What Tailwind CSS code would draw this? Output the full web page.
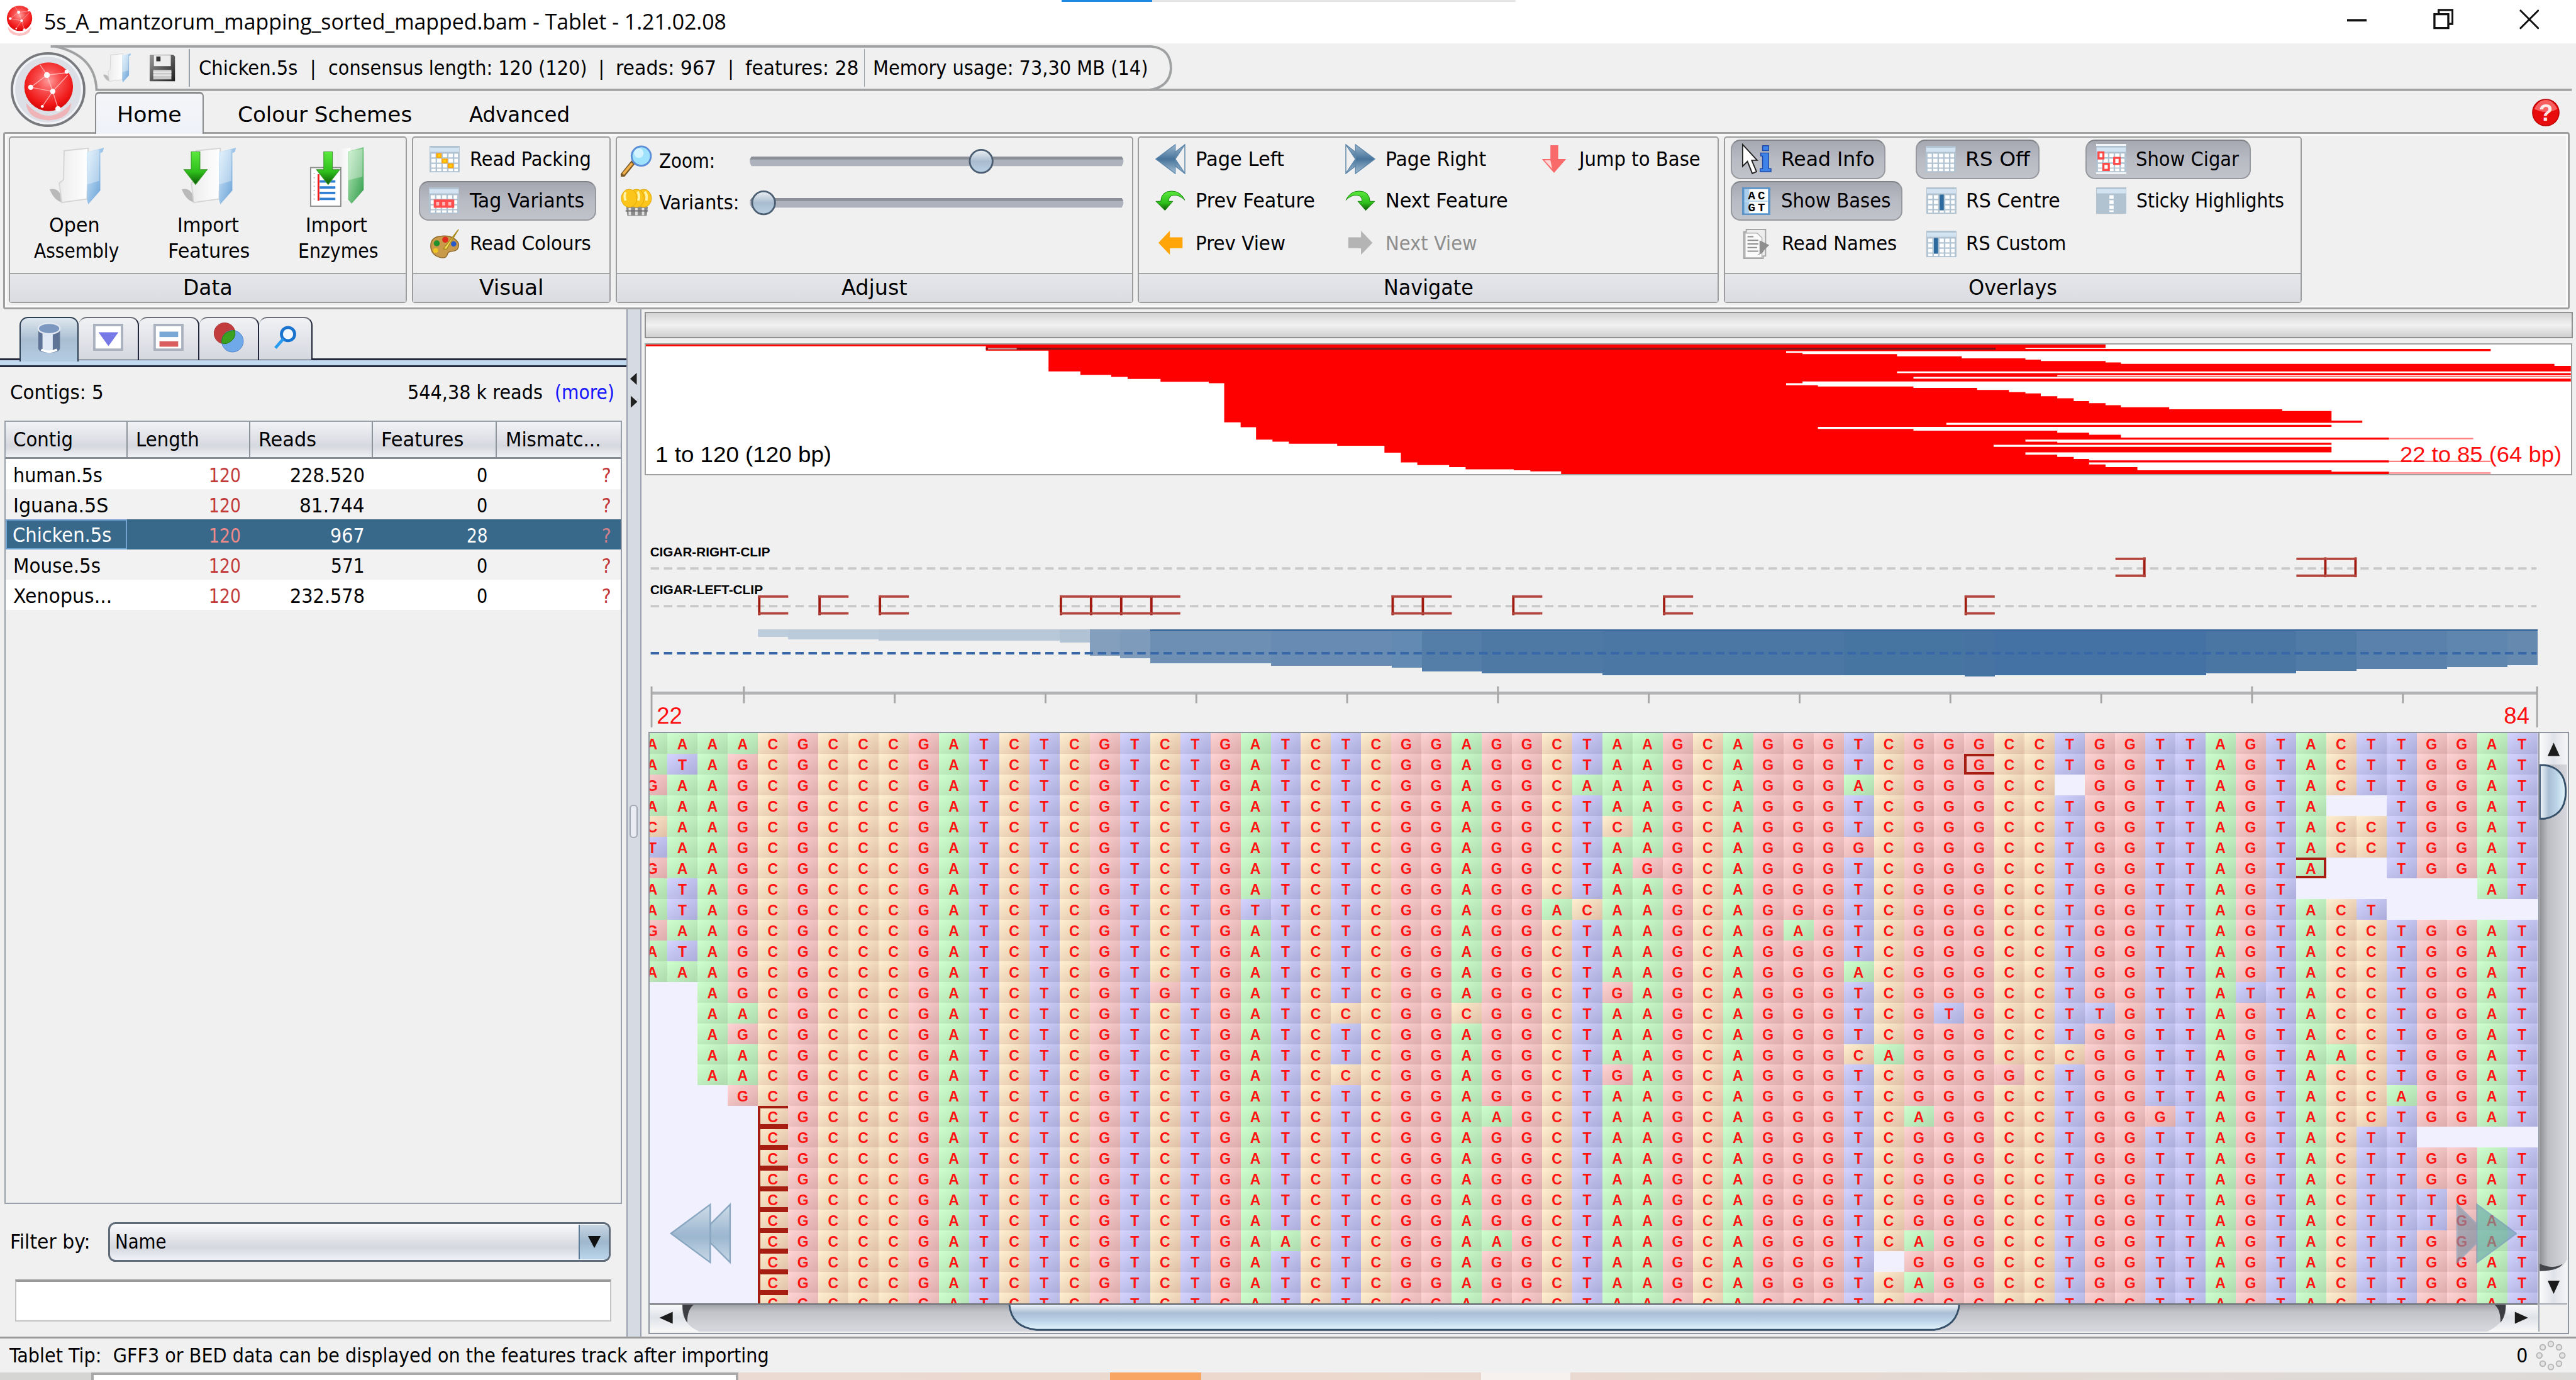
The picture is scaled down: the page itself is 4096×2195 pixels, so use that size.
<!DOCTYPE html>
<html lang="en">
<head>
<meta charset="utf-8">
<title>5s_A_mantzorum_mapping_sorted_mapped.bam - Tablet - 1.21.02.08</title>
<script src="https://cdn.jsdelivr.net/npm/@tailwindcss/browser@4"></script>
</head>
<body class="bg-[#f0f0f0] overflow-hidden">
<!-- shared icon shapes and gradients -->
<svg width="0" height="0" class="absolute">
  <defs>
    <radialGradient id="gBall" cx="50%" cy="38%" r="65%"><stop offset="0" stop-color="#ff9d9d"/><stop offset=".35" stop-color="#f85050"/><stop offset=".75" stop-color="#f01818"/><stop offset="1" stop-color="#cc0404"/></radialGradient>
    <linearGradient id="gBlueSide" x1="0" y1="0" x2="1" y2="1"><stop offset="0" stop-color="#d8eefc"/><stop offset="1" stop-color="#5b97d2"/></linearGradient>
    <linearGradient id="gGreenSide" x1="0" y1="0" x2="1" y2="1"><stop offset="0" stop-color="#bdeec0"/><stop offset="1" stop-color="#2f9a48"/></linearGradient>
    <linearGradient id="gPaper" x1="0" y1="0" x2="1" y2="0"><stop offset="0" stop-color="#ececec"/><stop offset="1" stop-color="#ffffff"/></linearGradient>
    <linearGradient id="gGreen" x1="0" y1="0" x2="0" y2="1"><stop offset="0" stop-color="#5ae83c"/><stop offset=".6" stop-color="#2fc01c"/><stop offset="1" stop-color="#0c5a06"/></linearGradient>
    <linearGradient id="gSteel" x1="0" y1="0" x2="0" y2="1"><stop offset="0" stop-color="#9db7cd"/><stop offset=".5" stop-color="#47749b"/><stop offset="1" stop-color="#a5bed2"/></linearGradient>
    <linearGradient id="gPale" x1="0" y1="0" x2="0" y2="1"><stop offset="0" stop-color="#cfdde9"/><stop offset=".55" stop-color="#9bb6cf"/><stop offset="1" stop-color="#c9d9e7"/></linearGradient>
    <linearGradient id="gThumbV" x1="0" y1="0" x2="0" y2="1"><stop offset="0" stop-color="#f4f8fb"/><stop offset=".35" stop-color="#a9bed4"/><stop offset=".65" stop-color="#bcd4e8"/><stop offset="1" stop-color="#e4f6fd"/></linearGradient>
    <linearGradient id="gThumbH" x1="0" y1="0" x2="1" y2="0"><stop offset="0" stop-color="#f4f8fb"/><stop offset=".35" stop-color="#a9bed4"/><stop offset=".65" stop-color="#bcd4e8"/><stop offset="1" stop-color="#e4f6fd"/></linearGradient>
    <linearGradient id="gKnob" x1="0" y1="0" x2="0" y2="1"><stop offset="0" stop-color="#eef1f5"/><stop offset=".5" stop-color="#a9bccf"/><stop offset="1" stop-color="#b9d0e4"/></linearGradient>
    <linearGradient id="gFloppy" x1="0" y1="0" x2="1" y2="1"><stop offset="0" stop-color="#9a9a9a"/><stop offset="1" stop-color="#1e1e1e"/></linearGradient>
    <symbol id="ball" viewBox="0 0 90 104">
      <circle cx="45" cy="44" r="42" fill="url(#gBall)"/>
      <g stroke="#ffc4c4" stroke-width="1.500" fill="none" opacity=".8"><path d="M14 45L42 24L76 20M42 24L52 52L14 45M52 52L62 84M52 52L78 24M42 24L30 6M52 52L34 78"/></g>
      <g fill="#fff"><circle cx="42" cy="24" r="5"/><circle cx="14" cy="45" r="4.500"/><circle cx="52" cy="52" r="4.500"/><circle cx="76" cy="18" r="3.500"/><circle cx="61" cy="82" r="4.500"/><circle cx="34" cy="78" r="2.500"/></g>
      <path d="M6 72Q45 116 84 72Q82 100 45 102Q8 100 6 72Z" fill="#ff8f8f" opacity=".55"/>
    </symbol>
    <symbol id="folder" viewBox="0 0 94 96">
      <path d="M2 70Q20 66 24 92Q10 90 2 70Z" fill="#b9b9b9"/>
      <path d="M26 6L66 2L64 86L22 92L18 60L25 54Z" fill="url(#gPaper)" stroke="#d5d5d5" stroke-width="2"/>
      <path d="M64 8L92 1L90 8L86 10V72L66 95L64 88Z" fill="url(#gBlueSide)"/>
      <path d="M66 8L84 4V56L64 62Z" fill="#fff" opacity=".35"/>
    </symbol>
    <symbol id="cells" viewBox="0 0 50 44">
      <rect width="50" height="44" fill="#b1c2d0"/><rect x="1" y="3" width="48" height="7" fill="#d3e3f1"/>
      <g fill="#fff"><path d="M3 13h7v6H3zM12.5 13h7v6h-7zM22 13h7v6h-7zM31.500 13h7v6h-7zM41 13h6v6h-6zM3 21.500h7v6H3zM12.500 21.500h7v6h-7zM22 21.500h7v6h-7zM31.500 21.500h7v6h-7zM41 21.500h6v6h-6zM3 30h7v6H3zM12.500 30h7v6h-7zM22 30h7v6h-7zM31.500 30h7v6h-7zM41 30h6v6h-6zM3 38h7v4H3zM12.500 38h7v4h-7zM22 38h7v4h-7zM31.500 38h7v4h-7zM41 38h6v4h-6z"/></g>
    </symbol>
    <symbol id="pageL" viewBox="0 0 50 50"><path d="M49 1V49L33 25ZM49 1L18 25L49 49Z" fill="url(#gSteel)" stroke="#5d87ab" stroke-width="1.500"/><path d="M33 1L1 25L33 49Z" fill="url(#gSteel)" stroke="#5d87ab" stroke-width="1.500"/></symbol>
    <symbol id="curveL" viewBox="0 0 50 34"><path d="M49 16Q42 1 27 1Q10 1 9 18H1L16 33L29 18H22Q22 9 30 8Q40 7 49 16Z" fill="url(#gGreen)" stroke="#17830d" stroke-width="1"/></symbol>
    <symbol id="blockL" viewBox="0 0 42 42"><path d="M1 21L20 1V12H41V30H20V41Z" fill="currentColor"/></symbol>
    <symbol id="downArrow" viewBox="0 0 50 70"><path d="M16 1H34V38H49L25 69L1 38H16Z" fill="url(#gGreen)" stroke="#3b9c2a" stroke-width="1.500"/></symbol>
    <symbol id="track" viewBox="0 0 626 20"><path d="M6 2H620Q626 10 620 18H6Q0 10 6 2Z" fill="#aeb2bd"/><path d="M6 2H620L623 7H3Z" fill="#8b8f98"/></symbol>
  </defs>
</svg>

<div id="root" class="[zoom:0.95925] relative flex flex-col w-[4270px] h-[2288px] overflow-hidden bg-[#f0f0f0] text-black text-[33px] leading-[40px] whitespace-nowrap font-['DejaVu_Sans_Condensed','DejaVu_Sans',sans-serif]">

  <!-- application button, over the quick access bar and the tabs -->
  <svg class="absolute z-20 left-[17px] top-[85px] w-[126px] h-[126px]" viewBox="0 0 126 126"><circle cx="63" cy="63" r="60" fill="#dcdfe6" stroke="#77797d" stroke-width="4"/><circle cx="63" cy="63" r="56" fill="none" stroke="#f3f4f7" stroke-width="3"/><use href="#ball" x="20" y="16" width="88" height="100"/></svg>

  <!-- title bar -->
  <header class="relative flex items-center h-[72px] shrink-0 bg-white font-['Open_Sans',sans-serif] text-[36px]">
    <div class="absolute left-[1760px] top-0 w-[150px] h-[3px] bg-[#1e88e0]"></div>
    <div class="absolute left-[1910px] top-0 w-[602px] h-[3px] bg-[#e6e6e6]"></div>
    <svg class="ml-[9px] mb-[4px] w-[46px] h-[52px]"><use href="#ball"/></svg>
    <span data-w="1131" class="ml-[18px]">5s_A_mantzorum_mapping_sorted_mapped.bam - Tablet - 1.21.02.08</span>
    <div class="ml-auto mr-[61px] flex items-center gap-[109px] mb-[8px]">
      <svg class="w-[33px] h-[33px]"><path d="M0 18H33" stroke="#111" stroke-width="4"/></svg>
      <svg class="w-[34px] h-[34px] ml-px" fill="none" stroke="#111" stroke-width="3.500"><path d="M2 9H25V32H2ZM9 9V2H32V25H25"/></svg>
      <svg class="w-[33px] h-[33px]"><path d="M1 1L32 32M32 1L1 32" stroke="#111" stroke-width="3"/></svg>
    </div>
  </header>

  <!-- quick access bar -->
  <div class="relative h-[80px] shrink-0">
    <svg class="absolute left-0 top-0 w-[4270px] h-[80px]" fill="none" stroke="#a0a1a2" stroke-width="4"><path d="M84 5H1908Q1941 8 1941 42Q1939 72 1906 77"/><path d="M92 5Q158 20 160 77H4263"/></svg>
    <div class="relative flex items-center h-[75px] pl-[170px] pt-[6px]">
      <svg class="w-[48px] h-[50px]"><use href="#folder"/></svg>
      <svg class="w-[44px] h-[46px] ml-[29px]" viewBox="0 0 44 46"><path d="M1 1H40L43 4V45H1Z" fill="url(#gFloppy)"/><path d="M8 2H36V20H8Z" fill="#ededed"/><path d="M12 4H19V12H12Z" fill="#333"/><path d="M7 26H37V42H7Z" fill="#c9c9c9"/><path d="M7 30H37M7 35H37" stroke="#eee" stroke-width="2"/></svg>
      <div class="w-[2px] h-[62px] bg-[#98a0a8] ml-[22px]"></div>
      <div class="flex ml-[15px] w-[1104px]">
        <span data-w="164">Chicken.5s</span><span class="w-[50px] text-center">|</span><span data-w="429">consensus length: 120 (120)</span><span class="w-[48px] text-center">|</span><span data-w="167">reads: 967</span><span class="w-[47px] text-center">|</span><span data-w="188">features: 28</span>
      </div>
      <div class="w-[2px] h-[62px] bg-[#98a0a8] -ml-[2px]"></div>
      <span data-w="456" class="ml-[13px]">Memory usage: 73,30 MB (14)</span>
    </div>
  </div>

  <!-- ribbon tabs -->
  <div class="relative z-10 flex h-[70px] -mb-[3px] shrink-0 pl-[157px] text-[35px]">
    <div class="w-[181px] h-[70px] pt-[16px] pl-[35px] border-t-[4px] border-x-[3px] border-[#8b8c8e] rounded-t-[7px] bg-linear-to-b from-[#f5f6f9] to-[#eef1f8]"><span data-w="107">Home</span></div>
    <div class="pt-[19px] ml-[56px] w-[384px]"><span data-w="289">Colour Schemes</span></div>
    <div class="pt-[19px]"><span data-w="167">Advanced</span></div>
    <svg class="ml-auto mr-[26px] mt-[11px] w-[48px] h-[48px]" viewBox="0 0 48 48"><circle cx="24" cy="24" r="22" fill="#e80c0c" stroke="#b50000" stroke-width="1.500"/><path d="M5 18Q12 3 24 3T43 18Q24 28 5 18Z" fill="#ff9a9a" opacity=".6"/><text x="24" y="38" text-anchor="middle" font-family="Liberation Sans" font-weight="700" font-size="38" fill="#ffe9e9">?</text></svg>
  </div>

  <!-- ribbon -->
  <div class="flex gap-[9px] ml-[5px] w-[4255px] h-[294px] shrink-0 border-[4px] border-[#9fa0a2] rounded-[4px] pl-[6px] pt-[4px] shadow-[inset_0_0_0_3px_#fafafa]">
    <section class="flex flex-col w-[660px] h-[276px] shrink-0 border-[3px] border-[#9c9d9f] rounded-[5px]">
      <div class="flex-1 flex text-center">
        <div class="w-[222px] pt-[15px] flex flex-col items-center"><svg class="w-[94px] h-[98px]"><use href="#folder"/></svg><span data-w="84" class="mt-[12px] mr-[8px]">Open</span><span data-w="141" class="mt-[3px]">Assembly</span></div>
        <div class="w-[217px] pt-[15px] flex flex-col items-center"><svg class="w-[94px] h-[98px]"><use href="#folder"/><use href="#downArrow" x="-2" y="8" width="54" height="56"/></svg><span data-w="102" class="mt-[12px] mr-[4px]">Import</span><span data-w="136" class="mt-[3px]">Features</span></div>
        <div class="w-[210px] pt-[15px] flex flex-col items-center"><svg class="w-[94px] h-[100px]" viewBox="0 0 94 100"><path d="M46 4L68 2V90L46 90Z" fill="url(#gPaper)"/><path d="M64 8L90 1V72L70 95L64 88Z" fill="url(#gGreenSide)"/><path d="M66 8L88 4V50L64 56Z" fill="#fff" opacity=".35"/><rect x="2" y="35" width="50" height="64" fill="#fff" stroke="#8d8d8d" stroke-width="2"/><path d="M15 46V90" stroke="#f01818" stroke-width="3"/><path d="M17 58H43M17 68H43M17 77H43M17 87H43" stroke="#2f7fd2" stroke-width="4"/><path d="M8 44V92" stroke="#bbb" stroke-width="2" stroke-dasharray="2 5"/><use href="#downArrow" x="4" y="8" width="54" height="56"/></svg><span data-w="102" class="mt-[10px] mr-[6px]">Import</span><span data-w="133" class="mt-[3px]">Enzymes</span></div>
      </div>
      <footer class="h-[48px] border-t-[3px] border-[#a3a4a6] bg-linear-to-b from-[#e6e7eb] to-[#dbdce1] text-center text-[35px] pt-[4px]"><span data-w="82">Data</span></footer>
    </section>

    <section class="flex flex-col w-[329px] h-[276px] shrink-0 border-[3px] border-[#9c9d9f] rounded-[5px]">
      <div class="flex-1 pt-[3px] pl-[9px]">
        <div class="flex items-center h-[66px] pl-[18px]"><svg class="w-[50px] h-[44px]"><use href="#cells"/><path d="M11 12h9v8h-9zM20 21h10v8H20zM30 29h10v8H30z" fill="#ffa910"/><path d="M14 14h4v4h-4zM23 23h4v4h-4zM33 31h4v4h-4z" fill="#ffd400"/></svg><span data-w="201" class="ml-[17px]">Read Packing</span></div>
        <div class="flex items-center h-[66px] w-[294px] mt-[3px] pl-[15px] rounded-[16px] border-[3px] border-[#97999f] border-t-[#818389] bg-linear-to-b from-[#a6a8b1] via-[#b9bbc4] to-[#c1c3cb]"><svg class="w-[50px] h-[44px]"><use href="#cells"/><path d="M8 20H42V34H8Z" fill="#ff4d4d"/><path d="M12 24h5v6h-5zM22 24h5v6h-5zM32 24h5v6h-5z" fill="#ffb9b9"/></svg><span data-w="190" class="ml-[17px]">Tag Variants</span></div>
        <div class="flex items-center h-[66px] mt-[5px] pl-[18px]"><svg class="w-[50px] h-[50px]" viewBox="0 0 50 50"><path d="M2 30Q1 13 20 12Q40 10 48 24Q50 36 38 37Q30 37 29 44Q26 50 16 47Q3 43 2 30Z" fill="#c99a4a" stroke="#8f6a2a" stroke-width="1.500"/><circle cx="12" cy="24" r="5" fill="#20902c"/><circle cx="26" cy="18" r="5" fill="#e02a1c"/><circle cx="40" cy="25" r="4.500" fill="#2558c8"/><circle cx="10" cy="36" r="4" fill="#f0c624"/><path d="M48 1L23 33L28 34Z" fill="#f5dc5c" stroke="#a98a1c" stroke-width="1.500"/></svg><span data-w="201" class="ml-[17px]">Read Colours</span></div>
      </div>
      <footer class="h-[48px] border-t-[3px] border-[#a3a4a6] bg-linear-to-b from-[#e6e7eb] to-[#dbdce1] text-center text-[35px] pt-[4px]"><span data-w="107">Visual</span></footer>
    </section>

    <section class="flex flex-col w-[857px] h-[276px] shrink-0 border-[3px] border-[#9c9d9f] rounded-[5px]">
      <div class="flex-1 pt-[6px] pl-[6px]">
        <div class="flex items-center h-[66px]"><svg class="w-[52px] h-[52px]" viewBox="0 0 52 52"><path d="M3 50L20 29" stroke="#7b5a2a" stroke-width="8" stroke-linecap="round"/><path d="M4 48L19 30" stroke="#f2b04a" stroke-width="4"/><circle cx="34" cy="18" r="16" fill="#9fe2fb" stroke="#5d8fd8" stroke-width="3"/><circle cx="30" cy="13" r="8" fill="#e0f8ff" opacity=".8"/></svg><span class="w-[158px] pl-[11px]"><span data-w="93">Zoom:</span></span>
          <div class="relative w-[626px] h-[44px] flex items-center"><svg class="w-[626px] h-[20px]"><use href="#track"/></svg><svg class="absolute left-[366px] top-[1px] w-[42px] h-[43px]" viewBox="0 0 42 43"><circle cx="21" cy="21.500" r="19" fill="url(#gKnob)" stroke="#4c5f72" stroke-width="3"/></svg></div></div>
        <div class="flex items-center h-[66px] mt-[3px]"><svg class="w-[52px] h-[46px]" viewBox="0 0 52 46"><path d="M9 30H45L43 45H11Z" fill="#8a8a8a"/><path d="M15 32V44M26 32V44M37 32V44" stroke="#e2e2e2" stroke-width="4"/><path d="M8 37H45" stroke="#6c6c6c" stroke-width="2"/><g fill="#fcc51c" stroke="#e0a60a" stroke-width="1"><ellipse cx="38" cy="16" rx="13" ry="15"/><ellipse cx="26" cy="16" rx="13" ry="15"/><ellipse cx="14" cy="16" rx="13" ry="15"/></g><path d="M8 6Q5 12 8 20M28 5Q32 12 29 20M40 5Q45 12 42 20" stroke="#fff3a8" stroke-width="4" fill="none"/></svg><span class="w-[158px] pl-[11px]"><span data-w="133">Variants:</span></span>
          <div class="relative w-[626px] h-[44px] flex items-center"><svg class="w-[626px] h-[20px]"><use href="#track"/></svg><svg class="absolute left-[6px] top-[1px] w-[42px] h-[43px]" viewBox="0 0 42 43"><circle cx="21" cy="21.500" r="19" fill="url(#gKnob)" stroke="#4c5f72" stroke-width="3"/></svg></div></div>
      </div>
      <footer class="h-[48px] border-t-[3px] border-[#a3a4a6] bg-linear-to-b from-[#e6e7eb] to-[#dbdce1] text-center text-[35px] pt-[4px]"><span data-w="109">Adjust</span></footer>
    </section>

    <section class="flex flex-col w-[963px] h-[276px] shrink-0 border-[3px] border-[#9c9d9f] rounded-[5px] -ml-px">
      <div class="flex-1 flex pt-[3px] pl-[27px]">
        <div class="w-[315px]">
          <div class="flex items-center h-[66px]"><svg class="w-[50px] h-[50px]"><use href="#pageL"/></svg><span data-w="147" class="ml-[17px]">Page Left</span></div>
          <div class="flex items-center h-[66px] mt-[3px]"><svg class="w-[50px] h-[34px]"><use href="#curveL"/></svg><span data-w="198" class="ml-[17px]">Prev Feature</span></div>
          <div class="flex items-center h-[66px] mt-[5px]"><svg class="w-[42px] h-[42px] mx-[4px] -mt-[4px] text-[#ffa50a]"><use href="#blockL"/></svg><span data-w="149" class="ml-[17px]">Prev View</span></div>
        </div>
        <div class="w-[321px]">
          <div class="flex items-center h-[66px]"><svg class="w-[50px] h-[50px] -scale-x-100"><use href="#pageL"/></svg><span data-w="167" class="ml-[17px]">Page Right</span></div>
          <div class="flex items-center h-[66px] mt-[3px]"><svg class="w-[50px] h-[34px] -scale-x-100"><use href="#curveL"/></svg><span data-w="203" class="ml-[17px]">Next Feature</span></div>
          <div class="flex items-center h-[66px] mt-[5px] text-[#8e8e8e]"><svg class="w-[42px] h-[42px] mx-[4px] -mt-[4px] -scale-x-100 text-[#b4b4b4]"><use href="#blockL"/></svg><span data-w="152" class="ml-[17px]">Next View</span></div>
        </div>
        <div><div class="flex items-center h-[66px]"><svg class="w-[50px] h-[48px]" viewBox="0 0 50 48"><path d="M19 1H32V24H45L25 47L5 24H19Z" fill="#f96a6a"/><path d="M9 26H19L22 40Z" fill="#ffd9d9"/></svg><span data-w="201" class="ml-[17px]">Jump to Base</span></div></div>
      </div>
      <footer class="h-[48px] border-t-[3px] border-[#a3a4a6] bg-linear-to-b from-[#e6e7eb] to-[#dbdce1] text-center text-[35px] pt-[4px]"><span data-w="149">Navigate</span></footer>
    </section>

    <section class="flex flex-col w-[958px] h-[276px] shrink-0 border-[3px] border-[#9c9d9f] rounded-[5px] -ml-px">
      <div class="flex-1 flex pt-[3px] pl-[10px]">
        <div class="w-[306px]">
          <div class="flex items-center h-[66px] w-[256px] pl-[15px] rounded-[16px] border-[3px] border-[#97999f] border-t-[#818389] bg-linear-to-b from-[#a6a8b1] via-[#b9bbc4] to-[#c1c3cb]"><svg class="w-[50px] h-[52px]" viewBox="0 0 50 52"><path d="M32 16H45V42H49V47H31V42H35V21H32ZM35 4H45V12H35Z" fill="#3e84e8" stroke="#1d4aa8" stroke-width="1.500"/><path d="M2 2V38L10 30L18 50L25 47L17 28H26Z" fill="#fff" stroke="#222" stroke-width="2"/></svg><span data-w="155" class="ml-[16px]">Read Info</span></div>
          <div class="flex items-center h-[66px] w-[284px] mt-[3px] pl-[15px] rounded-[16px] border-[3px] border-[#97999f] border-t-[#818389] bg-linear-to-b from-[#a6a8b1] via-[#b9bbc4] to-[#c1c3cb]"><svg class="w-[50px] h-[46px]" viewBox="0 0 50 46"><rect x="3" y="1" width="43" height="44" fill="#fff" stroke="#5b94c9" stroke-width="4"/><rect x="5" y="3" width="8" height="40" fill="#a9cdea"/><path d="M5 23H44" stroke="#b9d8ef" stroke-width="2"/><g font-family="Liberation Mono" font-weight="700" font-size="20" fill="#000"><text x="11" y="20">A</text><text x="27" y="20">C</text><text x="11" y="40">G</text><text x="27" y="40">T</text></g></svg><span data-w="182" class="ml-[16px]">Show Bases</span></div>
          <div class="flex items-center h-[66px] mt-[5px] pl-[18px]"><svg class="w-[50px] h-[52px]" viewBox="0 0 50 52"><path d="M4 6H8V2H40V46H36V50H4Z" fill="#ededed" stroke="#a5a5a5" stroke-width="2"/><path d="M6 8H26L34 16V49H6Z" fill="#fafafa" stroke="#b0b0b0" stroke-width="1.500"/><path d="M10 14H20M10 20H28M10 26H28M10 32H26M10 38H28" stroke="#8e8e8e" stroke-width="2"/><path d="M46 28L30 20V42L26 44Q34 44 38 36Z" fill="#8f8f8f"/></svg><span data-w="191" class="ml-[16px]">Read Names</span></div>
        </div>
        <div class="w-[282px]">
          <div class="flex items-center h-[66px] w-[206px] pl-[15px] rounded-[16px] border-[3px] border-[#97999f] border-t-[#818389] bg-linear-to-b from-[#a6a8b1] via-[#b9bbc4] to-[#c1c3cb]"><svg class="w-[50px] h-[44px]"><use href="#cells"/></svg><span data-w="107" class="ml-[16px]">RS Off</span></div>
          <div class="flex items-center h-[66px] mt-[3px] pl-[18px]"><svg class="w-[50px] h-[44px]"><use href="#cells"/><path d="M22 12H29V38H22Z" fill="#2d6a9e"/></svg><span data-w="156" class="ml-[16px]">RS Centre</span></div>
          <div class="flex items-center h-[66px] mt-[5px] pl-[18px]"><svg class="w-[50px] h-[44px]"><use href="#cells"/><path d="M12.500 12H19.500V38H12.500Z" fill="#2d6a9e"/></svg><span data-w="166" class="ml-[16px]">RS Custom</span></div>
        </div>
        <div>
          <div class="flex items-center h-[66px] w-[274px] pl-[15px] rounded-[16px] border-[3px] border-[#97999f] border-t-[#818389] bg-linear-to-b from-[#a6a8b1] via-[#b9bbc4] to-[#c1c3cb]"><svg class="w-[50px] h-[50px]" viewBox="0 0 50 50"><rect width="50" height="50" fill="#f1f5f8"/><use href="#cells" y="3" width="50" height="44"/><g fill="#fff" stroke="#ff4a4a" stroke-width="3.500"><path d="M4 14H12V24H4ZM30 23H39V33H30ZM12 33H21V43H12Z"/></g></svg><span data-w="171" class="ml-[16px]">Show Cigar</span></div>
          <div class="flex items-center h-[66px] mt-[3px] pl-[18px]"><svg class="w-[50px] h-[44px]"><rect width="50" height="44" fill="#b1c2d0"/><rect x="1" y="3" width="48" height="7" fill="#d3e3f1"/><path d="M22 13h7v6h-7zM22 21.500h7v6h-7zM22 30h7v6h-7zM22 38h7v3h-7z" fill="#fff"/></svg><span data-w="245" class="ml-[16px]">Sticky Highlights</span></div>
        </div>
      </div>
      <footer class="h-[48px] border-t-[3px] border-[#a3a4a6] bg-linear-to-b from-[#e6e7eb] to-[#dbdce1] text-center text-[35px] pt-[4px]"><span data-w="147">Overlays</span></footer>
    </section>
  </div>

  <!-- main area -->
  <div class="flex h-[1703px] shrink-0">
    <aside class="flex flex-col w-[1038px] h-full">
      <div class="relative z-10 flex pl-[32px] pt-[12px] h-[83px] -mb-[3px] shrink-0">
        <div class="flex justify-center w-[98px] h-[74px] pt-[8px] border-[3px] border-b-0 border-[#2c3f52] rounded-t-[14px] bg-linear-to-b from-[#dfe7ee] via-[#a9bed2] to-[#b4cce2]"><svg class="w-[42px] h-[52px]" viewBox="0 0 42 52"><path d="M3 10V42Q3 50 21 50T39 42V10Z" fill="#5e7396"/><path d="M10 18V46Q16 50 27 47V18Z" fill="#dfe8f4"/><ellipse cx="21" cy="10" rx="18" ry="9" fill="#7c97c0" stroke="#dfe6f0" stroke-width="2.500"/><path d="M8 45Q21 52 34 45" stroke="#fff" stroke-width="4" fill="none"/></svg></div>
        <div class="flex justify-center w-[100px] h-[71px] pt-[10px] border-t-[3px] border-r-[3px] border-[#6b6e76] border-r-[#22263a] rounded-t-[14px] bg-linear-to-b from-[#f1f2f5] to-[#d5d7df]"><svg class="w-[50px] h-[45px]" viewBox="0 0 50 45"><rect x="2" y="2" width="46" height="41" fill="#fff" stroke="#aab2bf" stroke-width="4"/><path d="M9 14H42L25.500 37Z" fill="#7779e6"/></svg></div>
        <div class="flex justify-center w-[100px] h-[71px] pt-[10px] border-t-[3px] border-r-[3px] border-[#6b6e76] border-r-[#22263a] rounded-t-[14px] bg-linear-to-b from-[#f1f2f5] to-[#d5d7df]"><svg class="w-[50px] h-[45px]" viewBox="0 0 50 45"><rect x="2" y="2" width="46" height="41" fill="#fff" stroke="#aab2bf" stroke-width="4"/><rect x="10" y="13" width="31" height="9" fill="#7aa8d6"/><rect x="10" y="29" width="31" height="9" fill="#d95f5f"/></svg></div>
        <div class="flex justify-center w-[100px] h-[71px] pt-[7px] border-t-[3px] border-r-[3px] border-[#6b6e76] border-r-[#22263a] rounded-t-[14px] bg-linear-to-b from-[#f1f2f5] to-[#d5d7df]"><svg class="w-[52px] h-[52px]" viewBox="0 0 52 52"><circle cx="19" cy="19" r="17.500" fill="#c23c3e" stroke="#a83032"/><circle cx="32" cy="32" r="18" fill="#6fa9ea" stroke="#4a7fc8"/><path d="M14 33Q14 15 36 14Q39 30 22 36Q14 37 14 33Z" fill="#3aa020" stroke="#2a7a18"/></svg></div>
        <div class="flex justify-center w-[88px] h-[71px] pt-[13px] border-t-[3px] border-r-[3px] border-[#6b6e76] border-r-[#22263a] rounded-t-[14px] bg-linear-to-b from-[#f1f2f5] to-[#d5d7df]"><svg class="w-[38px] h-[40px]" viewBox="0 0 38 40"><circle cx="24" cy="14" r="11" fill="#f4f8fc" stroke="#1b74d0" stroke-width="5"/><path d="M16 22L3 37" stroke="#2a9cf0" stroke-width="5"/></svg></div>
      </div>
      <div class="h-[15px] shrink-0 border-y-[4px] border-[#23283c] bg-[#c0d9ef] mt-px"></div>
      <div class="flex h-[88px] shrink-0 pt-[22px] pl-[17px] pr-[20px]"><span data-w="155">Contigs: 5</span><span data-w="224" class="ml-auto">544,38 k reads</span><span data-w="99" class="ml-[20px] text-[#1616ff]">(more)</span></div>
      <!-- contig table -->
      <div class="ml-[7px] w-[1024px] h-[1299px] shrink-0 border-[3px] border-[#98a0ac]">
        <div class="grid grid-cols-[203px_203px_203px_206px_203px] h-[62px] pt-[7px] border-b-[4px] border-[#848b93] bg-linear-to-b from-[#f2f3f6] via-[#d6d8df] via-70% to-[#eff1f5]">
          <div class="pl-[13px] -mt-[7px] pt-[10px] border-r-[3px] border-[#8e949c]"><span data-w="99">Contig</span></div>
          <div class="pl-[13px] -mt-[7px] pt-[10px] border-r-[3px] border-[#8e949c]"><span data-w="105">Length</span></div>
          <div class="pl-[13px] -mt-[7px] pt-[10px] border-r-[3px] border-[#8e949c]"><span data-w="96">Reads</span></div>
          <div class="pl-[14px] -mt-[7px] pt-[10px] border-r-[3px] border-[#8e949c]"><span data-w="137">Features</span></div>
          <div class="pl-[14px] -mt-[7px] pt-[10px]"><span data-w="158">Mismatc...</span></div>
        </div>
        <div class="grid grid-cols-[201px_189px_205px_204px_205px] h-[50px] pt-[7px] bg-white"><span class="pl-[13px]"><span data-w="148">human.5s</span></span><span class="text-right text-[#c23a3a]"><span data-w="53">120</span></span><span class="text-right"><span data-w="124">228.520</span></span><span class="text-right"><span data-w="18">0</span></span><span class="text-right text-[#c23a3a]">?</span></div>
        <div class="grid grid-cols-[201px_189px_205px_204px_205px] h-[50px] pt-[7px] bg-[#f2f2f2]"><span class="pl-[13px]"><span data-w="158">Iguana.5S</span></span><span class="text-right text-[#c23a3a]"><span data-w="53">120</span></span><span class="text-right"><span data-w="108">81.744</span></span><span class="text-right"><span data-w="18">0</span></span><span class="text-right text-[#c23a3a]">?</span></div>
        <div class="grid grid-cols-[201px_189px_205px_204px_205px] h-[50px] bg-[#39698a] text-white"><span class="pl-[10px] pt-[4px] border-[3px] border-[#73a4d1]"><span data-w="164">Chicken.5s</span></span><span class="text-right pt-[7px] text-[#f08a8a]"><span data-w="53">120</span></span><span class="text-right pt-[7px]"><span data-w="57">967</span></span><span class="text-right pt-[7px]"><span data-w="35">28</span></span><span class="text-right pt-[7px] text-[#d0808a]">?</span></div>
        <div class="grid grid-cols-[201px_189px_205px_204px_205px] h-[50px] pt-[7px] bg-[#f2f2f2]"><span class="pl-[13px]"><span data-w="145">Mouse.5s</span></span><span class="text-right text-[#c23a3a]"><span data-w="53">120</span></span><span class="text-right"><span data-w="56">571</span></span><span class="text-right"><span data-w="18">0</span></span><span class="text-right text-[#c23a3a]">?</span></div>
        <div class="grid grid-cols-[201px_189px_205px_204px_205px] h-[50px] pt-[7px] bg-white"><span class="pl-[13px]"><span data-w="164">Xenopus...</span></span><span class="text-right text-[#c23a3a]"><span data-w="53">120</span></span><span class="text-right"><span data-w="124">232.578</span></span><span class="text-right"><span data-w="18">0</span></span><span class="text-right text-[#c23a3a]">?</span></div>
      </div>
      <!-- filter -->
      <div class="flex items-center pl-[17px] mt-[31px] shrink-0">
        <span data-w="133">Filter by:</span>
        <div class="flex items-center justify-between ml-[29px] w-[833px] h-[65px] border-[4px] border-[#5f6b78] rounded-[12px] bg-linear-to-b from-[#fafafb] via-[#d4d7de] via-65% to-[#f0f2f7] pl-[9px] overflow-hidden">
          <span data-w="85">Name</span>
          <div class="flex items-center justify-center w-[50px] h-[57px] border-l-[3px] border-[#5b7c98] bg-linear-to-b from-[#c8d6e2] via-[#9eb7cd] to-[#bcd6ec]"><svg class="w-[21px] h-[20px]"><path d="M0 0H21L10.500 20Z" fill="#111"/></svg></div>
        </div>
      </div>
      <div class="ml-[25px] mt-[30px] w-[988px] h-[69px] shrink-0 border-[3px] border-[#c4c4c4] border-t-[5px] border-t-[#9a9a9a] bg-white"></div>
    </aside>

    <!-- split bar -->
    <div class="flex flex-col items-center w-[25px] h-full shrink-0 border-x-[3px] border-[#9aa0ae] bg-[#d6dae3]">
      <svg class="w-[14px] h-[58px] mt-[105px] shrink-0"><path d="M12 0V20L1 10ZM2 38V58L13 48Z" fill="#222"/></svg>
      <div class="mt-[658px] w-[13px] h-[56px] border-[3px] border-[#a2a8b4] rounded-[6px] bg-[#e9ecf2]"></div>
    </div>

    <main class="flex flex-col w-[3207px] h-full pl-[6px] pt-[4px]">
      <div class="w-[3196px] h-[44px] shrink-0 border-[3px] border-[#909192] bg-linear-to-b from-[#d4d4d4] via-[#f2f2f2] to-[#cfcfcf]"></div>
      <!-- overview of all reads -->
      <div class="relative mt-[8px] w-[3195px] h-[219px] shrink-0 border-[3px] border-[#a0a0a0] bg-white">
        <svg class="block w-full h-full" viewBox="-311 62 1874 188" preserveAspectRatio="none">
          <path fill="#ff0000" d="M-311 62H1110V67H1032V68.500H1485V71.500H799V74H815V76H907V79H970V82H1032V84H1047V86H1110V88H1125V90H1547V93H1563V101H907V103.500H1563V106.500H1063V108H1563V109H923V111.500H1563V115.500H815V118H799V121H830V123H923V125H985V128H1016V131H1032V133H1047V137H1063V140H1079V144H1094V147H1110V150H1125V153H1172V156H1282V158.500H1330V172.500H1360V175.500H955V178.500H1330V181.500H830V184.500H923V187H1063V190H1094V193H1125V197H1386V200H1032V203H1063V204.500H1330V207.500H1001V210.500H1330V218.500H1032V222H1063V225H1079V228H1094V230H1386V233H1094V236H1110V240H1141V243H1141V244.500H1330V246.500H1386V250H580V246H550V244.500H534V243H487V240H471V237H440V233H424V219H408V209H362V206H315V203H299V200H283V182H268V175H252V118H237V116H190V112H158V109H142V106H112V101H81V71H20V64.500H-311Z"/>
          <path d="M1386 198.500H1468M1386 231.500H1485M1386 248.500H1485" stroke="#ff8080" stroke-width="2"/>
          <path d="M20 66.500H1003V69.500H20Z" fill="#7c1414"/><path d="M22 67H50V69H22Z" fill="#c8a0a0"/>
        </svg>
        <span class="absolute left-[15px] top-[163px] font-['Liberation_Sans',sans-serif] text-[36px]"><span data-w="292">1 to 120 (120 bp)</span></span>
        <span class="absolute right-[16px] top-[163px] font-['Liberation_Sans',sans-serif] text-[36px] text-[#ff1010]"><span data-w="268">22 to 85 (64 bp)</span></span>
      </div>
      <!-- cigar tracks, coverage and ruler; user units are window pixels -->
      <svg id="tracks" class="block w-[3201px] h-[425px] shrink-0" viewBox="1069 788 3201 425"></svg>

      <!-- read alignment -->
      <div class="ml-[6px] mt-px w-[3184px] h-[998px] shrink-0 border-[3px] border-[#8f969f] flex flex-col">
        <div class="flex h-[945px]">
          <div class="relative w-[3130px] h-[945px] overflow-hidden bg-[#f0f0ff] shrink-0">
            <div id="reads" class="ml-[-20.5px] w-[3150px] font-['Liberation_Sans',sans-serif] font-bold text-[24px] text-[#ff1414]"></div>
            <svg class="absolute left-[33px] top-[778px] w-[102px] h-[102px]" viewBox="0 0 102 102"><path d="M100 3V99L67 66V36Z" fill="url(#gPale)" stroke="#8aa7c1" stroke-width="2.500"/><path d="M67 3L2 51L67 99Z" fill="url(#gPale)" stroke="#8aa7c1" stroke-width="2.500"/></svg>
            <svg class="absolute left-[2994px] top-[778px] w-[102px] h-[102px] opacity-65 -scale-x-100" viewBox="0 0 102 102"><path d="M100 3V99L67 66V36Z" fill="#7f94a6" stroke="#7f9fbb" stroke-width="2.500"/><path d="M67 3L2 51L67 99Z" fill="#69a5a6" stroke="#6a90b4" stroke-width="2.500"/></svg>
          </div>
          <!-- vertical scrollbar -->
          <svg class="block w-[48px] h-[945px] bg-[#efefef] border-l-[3px] border-[#9096a0] shrink-0" viewBox="0 0 45 945">
            <defs><linearGradient id="tv"><stop offset="0" stop-color="#8f9096"/><stop offset=".3" stop-color="#bdbec3"/><stop offset="1" stop-color="#d6d7dc"/></linearGradient><linearGradient id="bt"><stop offset="0" stop-color="#fbfbfb"/><stop offset=".5" stop-color="#dfe2e8"/><stop offset="1" stop-color="#f5f5f6"/></linearGradient></defs>
            <rect width="45" height="945" fill="url(#bt)"/>
            <path d="M0 52H45V872Q40 888 18 890H0Z" fill="url(#tv)"/><path d="M0 880Q22 890 38 880Q30 892 0 892Z" fill="#44464c"/>
            <path d="M0 53H8Q43 58 43 97T8 142H0Z" fill="url(#gThumbH)" stroke="#36506a" stroke-width="3"/>
            <path d="M13 38L23 16L33 38ZM13 908H33L23 930Z" fill="#1c1c1c"/>
          </svg>
        </div>
        <!-- horizontal scrollbar -->
        <div class="flex h-[47px]">
          <svg class="block w-[3130px] h-[47px] shrink-0" viewBox="0 0 3130 47">
            <defs><linearGradient id="th" x1="0" y1="0" x2="0" y2="1"><stop offset="0" stop-color="#9a9ba1"/><stop offset=".3" stop-color="#c2c3c8"/><stop offset="1" stop-color="#d8d9de"/></linearGradient><linearGradient id="bh" x1="0" y1="0" x2="0" y2="1"><stop offset="0" stop-color="#fbfbfb"/><stop offset=".5" stop-color="#dfe2e8"/><stop offset="1" stop-color="#f8f8f8"/></linearGradient></defs>
            <rect width="3130" height="47" fill="url(#bh)"/>
            <path d="M54 0H3077V16Q3070 36 3046 47H82Q58 36 54 16Z" fill="url(#th)"/>
            <path d="M54 0H76Q62 8 62 32Q54 22 54 0ZM3077 0H3055Q3069 8 3068 32Q3077 22 3077 0Z" fill="#3c3d42"/>
            <path d="M596 1Q599 40 641 44H2130Q2168 38 2171 1Z" fill="url(#gThumbV)" stroke="#36506a" stroke-width="3"/>
            <path d="M0 1H3130" stroke="#75787d" stroke-width="3"/>
            <path d="M16 24L38 14V34ZM3114 24L3092 14V34Z" fill="#1c1c1c"/>
          </svg>
          <div class="w-[48px] h-[47px] border-l-[3px] border-t-[3px] border-[#a5abb4] bg-[#f0f0f0]"></div>
        </div>
      </div>
    </main>
  </div>

  <!-- status bar -->
  <div class="flex h-[60px] shrink-0 border-t-[4px] border-[#9a9a9a] pt-[9px] pl-[16px]">
    <span data-w="1259">Tablet Tip:&nbsp; GFF3 or BED data can be displayed on the features track after importing</span>
    <span class="ml-auto">0</span>
    <svg class="ml-[13px] mr-[17px] -mt-[6px] w-[50px] h-[50px]" viewBox="0 0 50 50" fill="#e4e4e4" stroke="#b5b5b5" stroke-width="2"><circle cx="25" cy="6" r="4.500"/><circle cx="38.500" cy="11.500" r="4.500"/><circle cx="44" cy="25" r="4.500"/><circle cx="38.500" cy="38.500" r="4.500"/><circle cx="25" cy="44" r="4.500"/><circle cx="11.500" cy="38.500" r="4.500"/><circle cx="6" cy="25" r="4.500"/><circle cx="11.500" cy="11.500" r="4.500"/></svg>
  </div>

  <!-- edge of the taskbar behind the window -->
  <div class="flex h-[13px] shrink-0 bg-linear-to-r from-[#e6dcd9] via-[#ecd8cd] to-[#dcdad8]">
    <div class="w-[151px] bg-[#d5d5d4]"></div>
    <div class="w-[1073px] bg-white border-t-[5px] border-x-[5px] border-[#a8a8a8]"></div>
    <div class="ml-[616px] w-[151px] bg-[#f8a563]"></div>
    <div class="ml-[464px] w-[148px] bg-[#f6f1ef]"></div>
  </div>
</div>

<script>
// ---- reads ----
const run = "TCTCGTCTGATCTCGGAGGCTAAGCAGGGTCGGGCCTGGTTAGTACTTGGAT";
// prefix of four bases, then substitutions as [offset in run, bases]; a space is an uncovered base
const rows = [
  ["AAAA"], ["ATAG"], ["GAAG",[20,"A"],[29,"A"],[36," "]], ["AAAG",[45,"  "]],
  ["CAAG",[21,"C"],[46,"C"]], ["TAAG",[29,"G"],[46,"C"]], ["GAAG",[22,"G"],[45,"  "]], ["ATAG",[44,"      "]],
  ["ATAG",[9,"T"],[19,"AC"],[47,"     "]], ["GAAG",[27,"A"],[46,"C"]], ["ATAG",[46,"C"]], ["AAAG",[29,"A"],[46,"C"]],
  ["  AG",[6,"G"],[21,"G"],[42,"T"],[46,"C"]], ["  AA",[12,"C"],[16,"C"],[32,"T"],[37,"T"],[46,"C"]], ["  AG",[46,"C"]],
  ["  AA",[29,"CA"],[36,"C"],[45,"AC"]], ["  AA",[12,"C"],[21,"G"],[34,"G"],[46,"C"]], ["   G",[46,"CA"]],
  ["    ",[17,"A"],[31,"A"],[39,"G"],[46,"C"]], ["    ",[48,"    "]], ["    "], ["    "],
  ["    ",[48,"T"]], ["    ",[48,"T"]], ["    ",[10,"A"],[17,"A"],[31,"A"]], ["    ",[30," "]], ["    ",[31,"A"]], ["    "]
];
const look = {
  A: "bg-linear-to-br from-[#ceffce] to-[#aedaae]",
  C: "bg-linear-to-br from-[#fff0d0] to-[#dfbfa6]",
  G: "bg-linear-to-br from-[#ffd4d4] to-[#dcabab]",
  T: "bg-linear-to-br from-[#d4d4ff] to-[#acacda]",
  " ": ""
};
let html = "";
rows.forEach(([pre, ...subs], r) => {
  const b = run.split("");
  subs.forEach(([k, s]) => s.split("").forEach((ch, i) => b[k + i] = ch));
  const line = pre + "CGCCCGA" + b.join("");
  html += '<div class="flex h-[34.35px]">';
  line.split("").forEach((ch, c) => {
    let cut = "";
    if ((r >= 18 && c === 4) || (r === 1 && c === 44)) cut = '<i class="absolute inset-0 border-y-[5px] border-l-[5px] border-[#a81d12]"></i>';
    if (r === 6 && c === 55) cut = '<i class="absolute inset-0 border-y-[5px] border-r-[5px] border-[#a81d12]"></i>';
    html += '<div class="relative w-[50px] h-[34.35px] leading-[39px] pr-px text-center ' + look[ch] + '">' + ch.trim() + cut + "</div>";
  });
  html += "</div>";
});
document.getElementById("reads").innerHTML = html;

// ---- tracks ----
let t = "";
const dash = (y, col) => `<path d="M1079 ${y}H4205" stroke="${col}" stroke-width="4" stroke-dasharray="14 7.8"/>`;
t += dash(942.5, "#c9c9c9") + dash(1005, "#c9c9c9");
const label = (y, s, w) => `<text x="1078" y="${y}" font-family="Liberation Sans" font-weight="700" font-size="21" textLength="${w}" lengthAdjust="spacingAndGlyphs">${s}</text>`;
t += label(922.5, "CIGAR-RIGHT-CLIP", 199) + label(985, "CIGAR-LEFT-CLIP", 187);
[1257,1357,1457,1757,1807,1857,1907,2307,2357,2507,2757,3257].forEach(x =>
  t += `<path d="M${x + 2} 987V1020" stroke="#a01a10" stroke-width="4"/><path d="M${x} 989H${x + 50}M${x} 1017H${x + 50}" stroke="#b2453d" stroke-width="4"/>`);
[3507,3807,3857].forEach(x =>
  t += `<path d="M${x + 48} 924V957" stroke="#a01a10" stroke-width="4"/><path d="M${x} 926.500H${x + 50}M${x} 954.500H${x + 50}" stroke="#b2453d" stroke-width="4"/>`);
const cov = [[1257,1056,"#becddb"],[1307,1060,"#bccbda"],[1457,1062.5,"#b8c8d8"],[1757,1065.5,"#b0c2d4"],[1807,1087.5,"#849fbe"],[1857,1091,"#7f9bbc"],[1907,1100,"#6d8fb3"],[2107,1103.5,"#678bb2"],[2307,1107,"#638ab2"],[2357,1113,"#547da8"],[2457,1116,"#4e79a5"],[2657,1119,"#4a77a3"],[3057,1119,"#4675a2"],[3257,1122,"#4673a2"],[3307,1119,"#4572a4"],[3657,1116,"#4a76a4"],[3807,1112.5,"#507ba7"],[3907,1109.5,"#5a81ac"],[4057,1106,"#5f86ae"],[4157,1102.5,"#6589af"],[4207]];
for (let i = 0; i < cov.length - 1; i++)
  t += `<rect x="${cov[i][0]}" y="1043.500" width="${cov[i + 1][0] - cov[i][0]}" height="${cov[i][1] - 1043.5}" fill="${cov[i][2]}" shape-rendering="crispEdges"/>`;
t += `<path d="M1907 1045H4207" stroke="#3d6c9c" stroke-width="3"/>` + dash(1083, "#3767a6");
t += `<path d="M1080 1149H4207" stroke="#b3b4b6" stroke-width="5"/><path d="M1080.500 1138V1206M4206 1138V1206" stroke="#a6a6a6" stroke-width="3"/>`;
for (let i = 0; i < 12; i++) {
  const x = 1233.5 + 250 * i;
  t += `<path d="M${x} ${i % 5 ? 1150 : 1138}V1166" stroke="#a6a6a6" stroke-width="3"/>`;
}
const num = (x, s) => `<text x="${x}" y="1200" font-family="Liberation Sans" font-size="38" fill="#ff1010">${s}</text>`;
t += num(1089, "22") + num(4151, "84");
document.getElementById("tracks").innerHTML = t;

// ---- fit each label to its width, once the stylesheet is in force ----
const root = document.getElementById("root");
const labels = [...document.querySelectorAll("[data-w]")];
function fit() {
  labels.forEach(el => { el.style.cssText = "display:inline-block;flex-shrink:0;width:max-content;transform:none"; });
  const unit = root.getBoundingClientRect().width / 4270;
  const nat = labels.map(el => el.getBoundingClientRect().width / unit);
  labels.forEach((el, i) => {
    const w = +el.dataset.w;
    el.style.cssText = "display:inline-block;flex-shrink:0;text-align:left;transform-origin:0 50%;width:" + w + "px;transform:scaleX(" + w / nat[i] + ")";
  });
}
function whenStyled() {
  if (getComputedStyle(root).display === "flex") fit();
  else setTimeout(whenStyled, 20);
}
whenStyled();
window.addEventListener("load", fit);
document.fonts.ready.then(fit);
</script>
</body>
</html>
